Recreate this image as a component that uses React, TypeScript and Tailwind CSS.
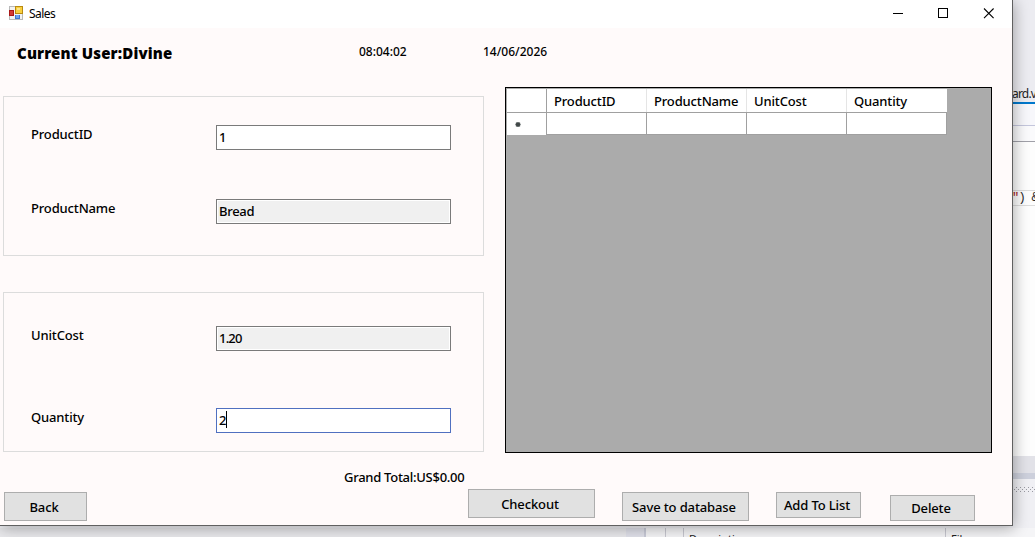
import type { ReactNode } from "react";
import clsx from "clsx";

const COLUMNS = ["ProductID", "ProductName", "UnitCost", "Quantity"];

function AppIcon() {
  return (
    <svg width="14" height="14" viewBox="0 0 14 14" className="shrink-0" shapeRendering="crispEdges">
      <rect x="0.5" y="0.5" width="13" height="13" fill="#f2f2f2" stroke="#b9b9b9" />
      <rect x="6" y="0" width="8" height="8" fill="#b98a10" />
      <rect x="7" y="1" width="6" height="6" fill="#f8cf3e" />
      <rect x="8" y="2" width="3" height="2" fill="#fde58a" />
      <rect x="0" y="4" width="5" height="6" fill="#a81818" />
      <rect x="1" y="5" width="3" height="4" fill="#d33a34" />
      <rect x="6" y="9" width="5" height="4" fill="#3f78d0" />
      <rect x="7" y="9" width="3" height="3" fill="#6fa3ee" />
    </svg>
  );
}

function TitleBar() {
  return (
    <div className="flex h-7 shrink-0 items-start bg-white">
      <div className="flex h-[26px] items-center gap-[6px] pl-[9px]">
        <AppIcon />
        <span className="pt-px text-[12px] leading-4 font-normal tracking-[-0.55px]">Sales</span>
      </div>
      <div className="ml-auto flex h-[26px] items-center pr-[17px]">
        <svg width="102" height="11" viewBox="0 0 102 11" fill="none" stroke="#000">
          <path d="M0 5.5h10" shapeRendering="crispEdges" />
          <rect x="45.5" y="0.5" width="9" height="9" shapeRendering="crispEdges" />
          <path d="M91 0.5l9.6 9.6M100.6 0.5l-9.6 9.6" strokeWidth="1.1" />
        </svg>
      </div>
    </div>
  );
}

interface FieldProps {
  label: string;
  value: string;
  readOnly?: boolean;
  focused?: boolean;
}

function Field({ label, value, readOnly, focused }: FieldProps) {
  return (
    <div className="flex h-[25px] items-start">
      <span className="w-[185px] leading-[18px] tracking-[-0.15px]">{label}</span>
      <div
        className={clsx(
          "flex h-[25px] w-[235px] items-center border bg-white p-px",
          focused ? "border-[#5070c0]" : "border-[#7a7a7a]",
        )}
      >
        <div className={clsx("flex h-full w-full items-center pl-px", readOnly && "bg-[#f0f0f0]")}>
          <span
            className={clsx(
              "pb-0.5 leading-[18px]",
              value.includes(".") ? "tracking-[-0.8px]" : "tracking-[-0.3px]",
            )}
          >
            {value}
          </span>
          {focused && <span className="mb-0.5 h-[17px] w-px bg-black" />}
        </div>
      </div>
    </div>
  );
}

function GroupBox({ children, className }: { children: ReactNode; className?: string }) {
  return (
    <div className={clsx("flex h-40 flex-col border border-[#dcdcdc] pl-[27px]", className)}>
      {children}
    </div>
  );
}

function DataGrid() {
  return (
    <div className="h-[366px] w-[487px] border border-black bg-[#ababab] pl-px pt-px">
      <div className="flex h-6 w-[440px] border-b border-[#a0a0a0] bg-white">
        <div className="w-10 border-r border-[#a0a0a0]" />
        {COLUMNS.map((col) => (
          <div
            key={col}
            className="w-[100px] border-r border-[#e5e5e5] pl-[7px] leading-[24px] tracking-[-0.15px] whitespace-nowrap last:border-white"
          >
            {col}
          </div>
        ))}
      </div>
      <div className="flex h-[22px] w-[440px] bg-white">
        <div className="flex w-10 items-center border-r border-[#a0a0a0] pl-2">
          <svg width="6" height="7" viewBox="0 0 7 7" stroke="#404848" strokeWidth="1.6">
            <path d="M3.5 0.5v6M0.5 3.5h6M1.3 1.3l4.4 4.4M5.7 1.3l-4.4 4.4" />
          </svg>
        </div>
        {COLUMNS.map((col) => (
          <div key={col} className="w-[100px] border-r border-b border-[#a0a0a0]" />
        ))}
      </div>
    </div>
  );
}

function PushButton({ children, className }: { children: ReactNode; className: string }) {
  return (
    <button
      className={clsx(
        "flex shrink-0 items-center justify-center border border-[#adadad] bg-[#e1e1e1] pt-0.5 pr-[3px] tracking-[-0.12px] whitespace-nowrap",
        className,
      )}
    >
      {children}
    </button>
  );
}

function SalesWindow() {
  return (
    <div className="absolute top-0 left-0 flex h-[526px] w-[1013px] flex-col border-r border-b border-[#606060] bg-[#fffafa] shadow-[1px_2px_14px_0px_rgba(0,0,0,0.33)]">
      <TitleBar />
      <div className="flex h-[59px] shrink-0 items-start pl-[17px]">
        <h1 className="mt-[15px] w-[342px] text-[15px] leading-5 font-black tracking-[0.14px]">
          Current User:Divine
        </h1>
        <span className="mt-[15px] w-[124px] text-[12px] leading-[18px]">08:04:02</span>
        <span className="mt-[15px] text-[12px] leading-[18px]">14/06/2026</span>
      </div>

      <div className="flex shrink-0 gap-[21px] pl-[3px]">
        <div className="flex w-[481px] flex-col gap-9 pt-[9px]">
          <GroupBox className="gap-[49px] pt-7">
            <Field label="ProductID" value="1" />
            <Field label="ProductName" value="Bread" readOnly />
          </GroupBox>
          <GroupBox className="gap-[57px] pt-[33px]">
            <Field label="UnitCost" value="1.20" readOnly />
            <Field label="Quantity" value="2" focused />
          </GroupBox>
        </div>
        <DataGrid />
      </div>

      <div className="flex items-start pl-1">
        <PushButton className="mt-[39px] h-[29px] w-[83px]">Back</PushButton>
        <span className="mt-[15px] ml-[257px] w-[124px] leading-[18px] tracking-[-0.27px] whitespace-nowrap">
          Grand Total:US$0.00
        </span>
        <PushButton className="mt-9 h-[29px] w-[127px]">Checkout</PushButton>
        <PushButton className="mt-[39px] ml-[27px] h-[29px] w-[127px]">Save to database</PushButton>
        <PushButton className="mt-[39px] ml-[27px] h-[26px] w-[85px]">Add To List</PushButton>
        <PushButton className="mt-[42px] ml-[29px] h-[26px] w-[85px]">Delete</PushButton>
      </div>
    </div>
  );
}

// Editor that shows past the right and bottom edges of the window
function EditorBackdrop() {
  return (
    <div className="flex h-full flex-col bg-[#fdfdfd] font-normal text-[#222]">
      <div className="flex h-[102px] items-end justify-end bg-[#ececf1]">
        <span className="w-[23px] text-[12px] leading-4 tracking-[-0.8px] whitespace-nowrap">
          ard.v
        </span>
      </div>
      <div className="h-0.5 bg-[#0078cc]" />
      <div className="h-[22px] border-b border-[#c4c6dc] bg-[#f7f7fb]" />
      <div className="h-4 border-b border-[#a0a0a8] bg-[#fafafc]" />
      <div className="h-12" />
      <div className="flex h-4 items-center justify-end border-y border-[#dcdcdc]">
        <span className="w-[23px] font-['Liberation_Mono',monospace] text-[12px] tracking-[-0.7px] whitespace-pre">
          <span className="text-[#a31515]">"</span>) &amp;
        </span>
      </div>
      <div className="h-[250px]" />
      <div className="h-[17px] bg-[#e2e2e8]" />
      <div className="h-1.5 bg-[#cdd0dc]" />
      <div className="flex h-[49px] justify-end bg-[#f0f0f4] pt-2">
        <svg width="23" height="6">
          <defs>
            <pattern id="grip" width="4" height="4" patternUnits="userSpaceOnUse">
              <rect width="1" height="1" fill="#9a9aa2" />
              <rect x="2" y="2" width="1" height="1" fill="#9a9aa2" />
            </pattern>
          </defs>
          <rect width="23" height="5" fill="url(#grip)" />
        </svg>
      </div>
      <div className="flex h-[9px] overflow-hidden bg-[#f5f5f7] text-[11px] leading-4">
        <div className="w-[626px] bg-[#e9e9ec]" />
        <div className="w-5 border-r-2 border-[#c9cbd8] bg-[#e0e1ea]" />
        <div className="w-5 border-r border-[#c8c8d0]" />
        <div className="w-[18px] border-r border-[#c8c8d0]" />
        <div className="w-[262px] border-r border-[#c8c8d0] pt-[3px] pl-[5px]">Description</div>
        <div className="pt-[3px] pl-[5px]">File</div>
      </div>
    </div>
  );
}

export default function App() {
  return (
    <div className="relative h-[537px] w-[1035px] overflow-hidden font-['Noto_Sans','Open_Sans',sans-serif] text-[13px] font-medium text-black">
      <EditorBackdrop />
      <SalesWindow />
    </div>
  );
}
